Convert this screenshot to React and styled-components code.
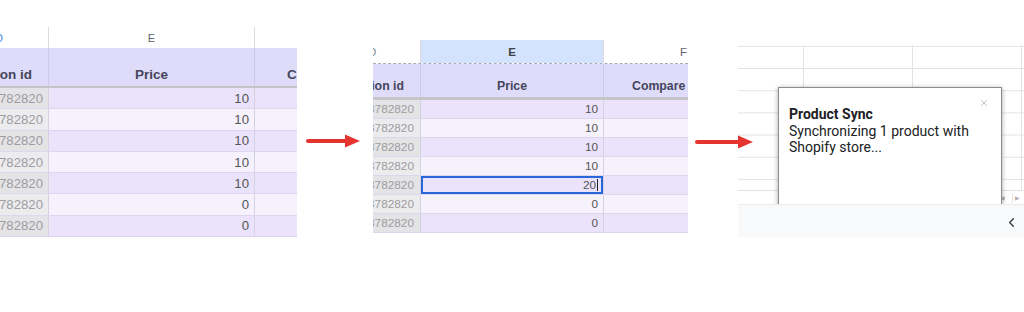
import React from 'react';
import styled, { createGlobalStyle } from 'styled-components';
import { ChevronLeft, X } from 'lucide-react';

const GlobalStyle = createGlobalStyle`
  *, *::before, *::after {
    box-sizing: border-box;
  }

  html,
  body {
    margin: 0;
    padding: 0;
    background: #fff;
  }

  body {
    font-family: 'Liberation Sans', Arial, sans-serif;
  }
`;

const Stage = styled.main`
  display: flex;
  align-items: flex-start;
  width: 1024px;
  height: 312px;
  overflow: hidden;
`;

const Sheet = styled.section`
  flex: none;
  margin-top: ${({ $top }) => $top}px;
  margin-left: ${({ $left }) => $left}px;
  width: ${({ $width }) => $width}px;
  overflow: hidden;
`;

const Row = styled.div`
  display: grid;
  grid-template-columns: ${({ $cols }) => $cols.map(c => `${c}px`).join(' ')};
  height: ${({ $h }) => $h}px;
`;

const LetterRow = styled(Row)`
  background: #fff;
  border-bottom: ${({ $dashed }) => ($dashed ? '1px dashed #a9adb3' : 'none')};
`;

const Letter = styled.div`
  display: flex;
  align-items: center;
  justify-content: ${({ $justify }) => $justify || 'center'};
  padding-left: ${({ $padL }) => $padL || 0}px;
  font-size: ${({ $size }) => $size}px;
  font-weight: ${({ $active }) => ($active ? 'bold' : 'normal')};
  color: ${({ $color }) => $color || '#5f6368'};
  background: ${({ $active }) => ($active ? '#d3e3fd' : 'transparent')};
  border-right: ${({ $edge }) => ($edge ? '1px solid #dadce0' : 'none')};
  overflow: hidden;
  white-space: nowrap;
`;

const Glyph = styled.span`
  margin-left: ${({ $shift }) => $shift || 0}px;
`;

const HeadRow = styled(Row)`
  background: #dfdcfa;
  border-bottom: ${({ $rule }) => $rule}px solid #c5c5c8;
`;

const HeadCell = styled.div`
  display: flex;
  align-items: flex-end;
  justify-content: ${({ $justify }) => $justify};
  padding: 0 ${({ $padR }) => $padR || 0}px 4px ${({ $padL }) => $padL || 0}px;
  font-size: ${({ $size }) => $size}px;
  font-weight: bold;
  color: #45455c;
  border-right: ${({ $edge }) => ($edge ? '1px solid #cdcae6' : 'none')};
  white-space: nowrap;
  overflow: hidden;
`;

const DataRow = styled(Row)`
  background: ${({ $odd }) => ($odd ? '#ebe3fb' : '#f5f1fd')};
  border-bottom: 1px solid #ddd7ee;
`;

const IdCell = styled.div`
  display: flex;
  align-items: center;
  justify-content: flex-end;
  padding-right: ${({ $padR }) => $padR}px;
  font-size: ${({ $size }) => $size}px;
  color: #9d9d9f;
  background: ${({ $odd }) => ($odd ? '#e4e4e6' : '#ececee')};
  border-right: 1px solid #d4d2de;
  white-space: nowrap;
  overflow: hidden;
`;

const PriceCell = styled.div`
  display: flex;
  align-items: center;
  justify-content: flex-end;
  padding-right: 5px;
  font-size: ${({ $size }) => $size}px;
  color: #555;
  border-right: 1px solid #d4d2de;
  box-shadow: ${({ $selected }) => ($selected ? 'inset 0 0 0 2px #2767d9' : 'none')};
`;

const Caret = styled.span`
  display: inline-block;
  width: 1px;
  height: 1.1em;
  margin-left: 1px;
  background: #222;
`;

const EmptyCell = styled.div``;

const ArrowWrap = styled.div`
  position: relative;
  z-index: 2;
  flex: none;
  display: flex;
  margin-top: ${({ $top }) => $top}px;
  margin-left: ${({ $left }) => $left}px;
`;

const SyncPanel = styled.section`
  flex: none;
  display: flex;
  flex-direction: column;
  margin-top: 45px;
  margin-left: -15px;
  width: 286px;
  height: 192px;
`;

const GridArea = styled.div`
  position: relative;
  display: flex;
  flex-direction: column;
  flex: 1;
  overflow: hidden;
`;

const Cells = styled.div`
  flex: 1;
  background-color: #fff;
  background-image: linear-gradient(to right, #e3e3e3 1px, transparent 1px),
    linear-gradient(to bottom, transparent 21.2px, #e3e3e3 21.2px);
  background-size: 109px 100%, 100% 22.2px;
  background-position: 65px 0, 0 1.8px;
`;

const ScrollStrip = styled.div`
  display: flex;
  justify-content: flex-end;
  align-items: center;
  gap: 6px;
  height: 14px;
  padding-right: 3px;
  border-top: 1px solid #e3e3e3;
  background: #fff;
`;

const ScrollButton = styled.span`
  display: flex;
  align-items: center;
  justify-content: center;
  width: 9px;
  height: 10px;
  border-left: 1px solid #e6e6e6;
  font-size: 6px;
  color: #b0b0b0;
`;

const Dialog = styled.div`
  position: absolute;
  z-index: 1;
  top: 42px;
  left: 40px;
  width: 224px;
  height: 150px;
  padding: 18px 10px;
  background: #fff;
  border: 1px solid #8c8c8c;
  box-shadow: 0 1px 5px rgba(0, 0, 0, 0.35);
  font-family: Roboto, 'Liberation Sans', sans-serif;
  font-size: 14px;
  line-height: 16.5px;
  color: #202124;
`;

const DialogTitle = styled.div`
  font-weight: bold;
`;

const DialogClose = styled.span`
  position: absolute;
  top: 10px;
  right: 12px;
  display: flex;
  color: #a3a3a3;
`;

const BottomBar = styled.div`
  display: flex;
  align-items: flex-end;
  justify-content: flex-end;
  height: 33px;
  padding: 0 5px 7px 0;
  background: #f8f9fa;
  border-top: 1px solid #ececee;
  color: #3c4043;
`;

const RedArrow = ({ width }) => (
  <svg width={width} height="16" viewBox={`0 0 ${width} 16`}>
    <line
      x1="2"
      y1="8"
      x2={width - 12}
      y2="8"
      stroke="#e5332f"
      strokeWidth="4"
      strokeLinecap="round"
    />
    <path d={`M${width - 15} 1.5 L${width} 8 L${width - 15} 14.5 Z`} fill="#e5332f" strokeLinejoin="round" />
  </svg>
);

const before = {
  top: 27,
  left: 0,
  width: 297,
  cols: [49, 206, 42],
  letterH: 21,
  headH: 40,
  rule: 2,
  rowH: 21.3,
  letter: 11,
  head: 13.5,
  text: 13.2,
  idPad: 5,
  headPadR: 16,
  comparePad: 32,
  fPad: 90,
  dColor: '#4a86e8',
  dashed: false,
  active: false,
  values: ['10', '10', '10', '10', '10', '0', '0'],
  selected: -1,
};

const after = {
  top: 40,
  left: 13,
  width: 315,
  cols: [48, 183, 84],
  letterH: 24,
  headH: 36,
  rule: 3,
  rowH: 19,
  letter: 11.5,
  head: 12.3,
  text: 11.8,
  idPad: 6,
  headPadR: 16,
  comparePad: 28,
  fPad: 76,
  dColor: '#80868b',
  dashed: true,
  active: true,
  values: ['10', '10', '10', '10', '20', '0', '0'],
  selected: 4,
};

const SheetView = ({ cfg }) => (
  <Sheet $top={cfg.top} $left={cfg.left} $width={cfg.width}>
    <LetterRow $cols={cfg.cols} $h={cfg.letterH} $dashed={cfg.dashed}>
      <Letter $justify="flex-start" $size={cfg.letter} $color={cfg.dColor} $edge>
        <Glyph $shift={-5}>D</Glyph>
      </Letter>
      <Letter $size={cfg.letter} $active={cfg.active} $color={cfg.active ? '#3c4043' : undefined} $edge>
        E
      </Letter>
      <Letter $justify="flex-start" $padL={cfg.fPad} $size={cfg.letter}>
        F
      </Letter>
    </LetterRow>

    <HeadRow $cols={cfg.cols} $h={cfg.headH} $rule={cfg.rule}>
      <HeadCell $justify="flex-end" $padR={cfg.headPadR} $size={cfg.head} $edge>
        Variation id
      </HeadCell>
      <HeadCell $justify="center" $size={cfg.head} $edge>
        Price
      </HeadCell>
      <HeadCell $justify="flex-start" $padL={cfg.comparePad} $size={cfg.head}>
        Compare at price
      </HeadCell>
    </HeadRow>

    {cfg.values.map((value, i) => (
      <DataRow key={i} $cols={cfg.cols} $h={cfg.rowH} $odd={i % 2 === 0}>
        <IdCell $odd={i % 2 === 0} $padR={cfg.idPad} $size={cfg.text}>
          43782820
        </IdCell>
        <PriceCell $size={cfg.text} $selected={i === cfg.selected}>
          {value}
          {i === cfg.selected && <Caret />}
        </PriceCell>
        <EmptyCell />
      </DataRow>
    ))}
  </Sheet>
);

const App = () => (
  <>
    <GlobalStyle />
    <Stage>
      <SheetView cfg={before} />

      <ArrowWrap $top={133} $left={9}>
        <RedArrow width={54} />
      </ArrowWrap>

      <SheetView cfg={after} />

      <ArrowWrap $top={134} $left={7}>
        <RedArrow width={58} />
      </ArrowWrap>

      <SyncPanel>
        <GridArea>
          <Cells />
          <ScrollStrip>
            <ScrollButton>◀</ScrollButton>
            <ScrollButton>▶</ScrollButton>
          </ScrollStrip>

          <Dialog>
            <DialogClose>
              <X size={10} strokeWidth={1.6} />
            </DialogClose>
            <DialogTitle>Product Sync</DialogTitle>
            <div>Synchronizing 1 product with</div>
            <div>Shopify store...</div>
          </Dialog>
        </GridArea>

        <BottomBar>
          <ChevronLeft size={15} strokeWidth={2.4} />
        </BottomBar>
      </SyncPanel>
    </Stage>
  </>
);

export default App;
